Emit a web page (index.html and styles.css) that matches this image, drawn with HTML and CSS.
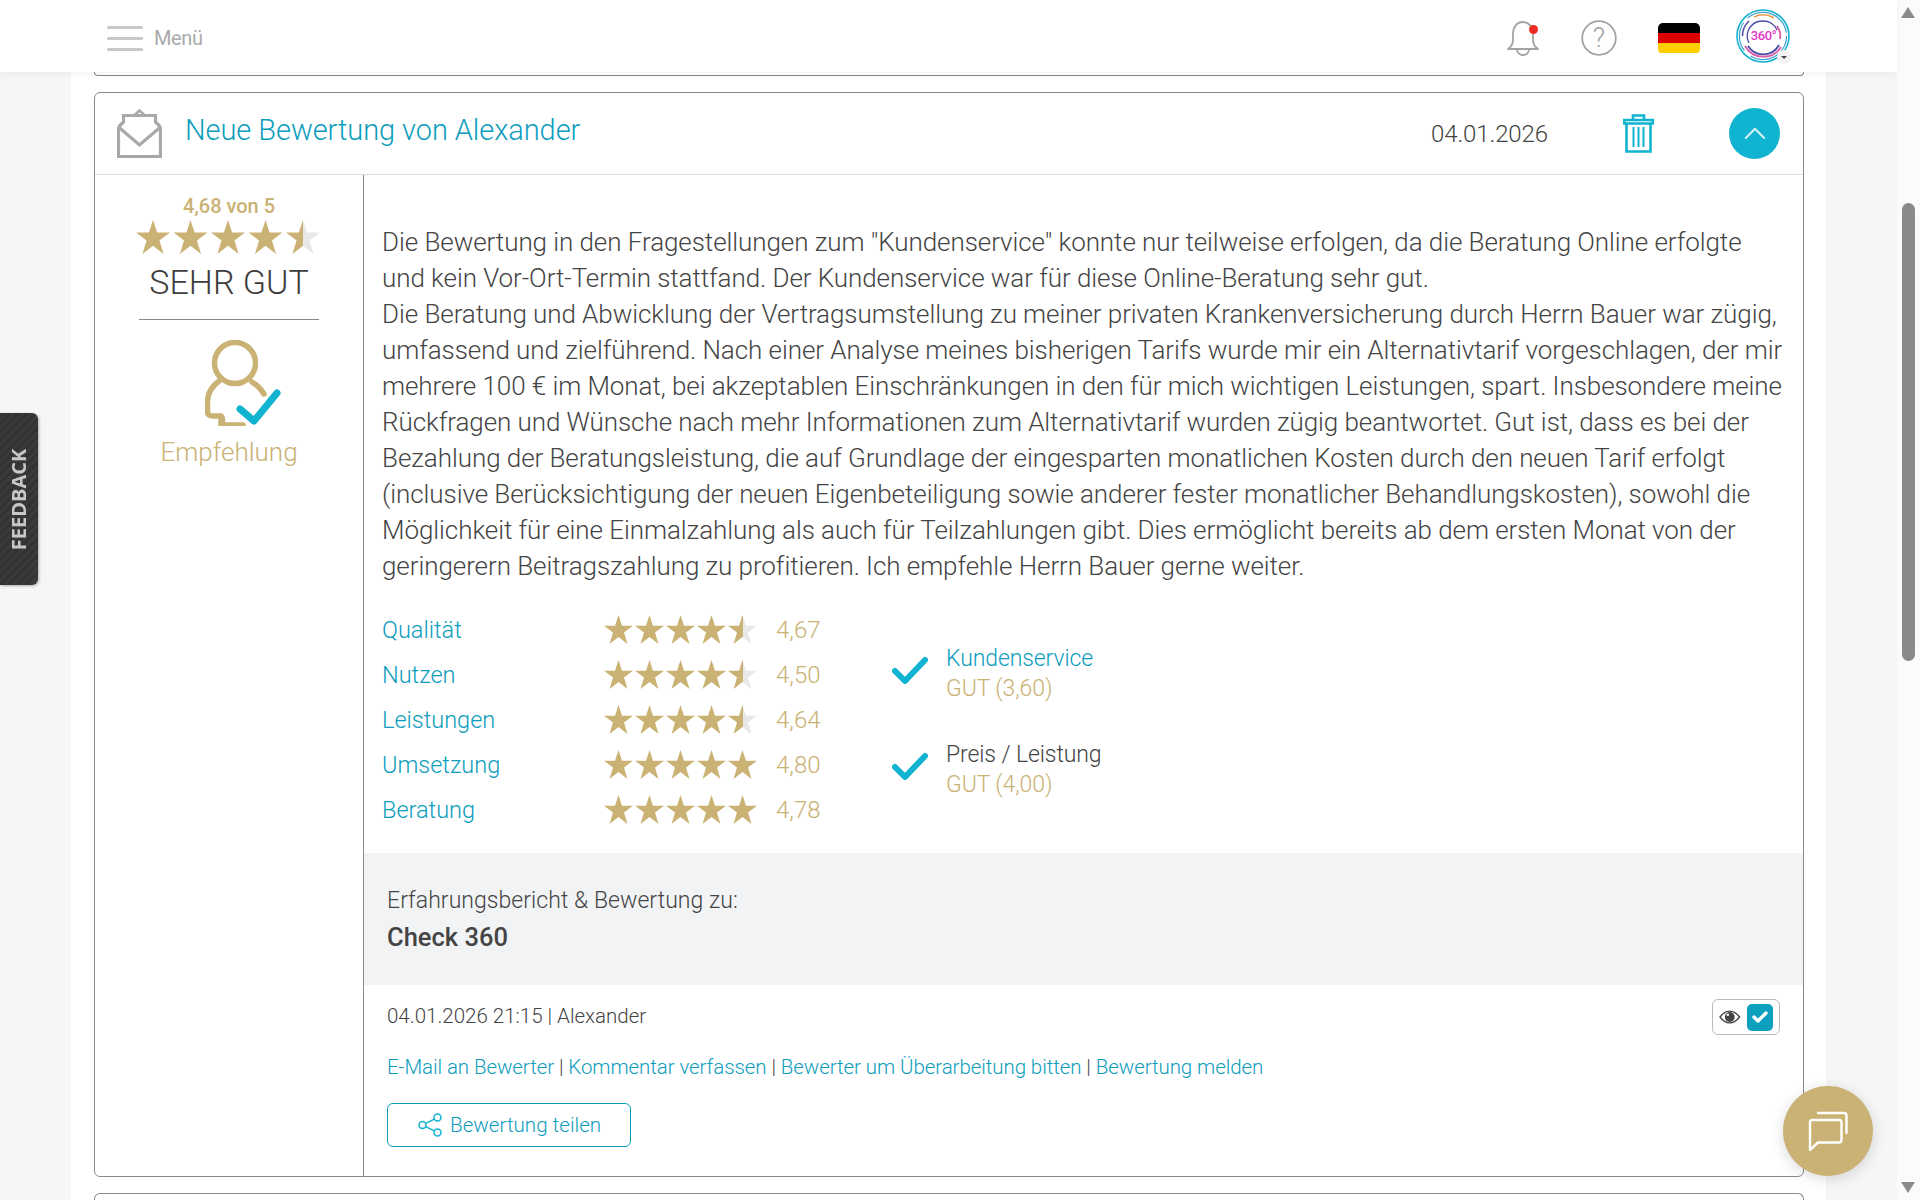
FILE: index.html
```html
<!DOCTYPE html>
<html lang="de">
<head>
  <meta charset="UTF-8" />
  <meta name="viewport" content="width=device-width, initial-scale=1.0"/>
  <title>Bewertungen</title>
  <link rel="stylesheet" href="styles.css">
</head>
<body>
  <div class="shell">
    <div class="page">
      <header class="topbar">
        <div class="menu">
          <span class="burger"><i></i><i></i><i></i></span>
          <span>Menü</span>
        </div>
        <div class="top-icons">
          <svg class="bell" viewBox="0 0 32 36" fill="none" stroke="#a3a3a3" stroke-width="1.8" stroke-linecap="round" stroke-linejoin="round">
            <path d="M1 29c3-2 5-4 5-9v-6C6 7 10 2 16 2c6 0 10 5 10 12v6c0 5 2 7 5 9z"/>
            <path d="M10 29c0 4 3 6 6 6s6-2 6-6"/>
          </svg>
          <span class="bell-dot"></span>
          <svg class="help" viewBox="0 0 36 36">
            <circle cx="18" cy="18" r="16.8" fill="none" stroke="#a3a3a3" stroke-width="1.8"/>
            <text x="18" y="27" text-anchor="middle" class="help-mark">?</text>
          </svg>
          <span class="flag"><i class="black"></i><i class="red"></i><i class="gold"></i></span>
          <span class="avatar">
            <svg viewBox="0 0 54 54" fill="none">
              <circle cx="27" cy="27" r="26" stroke="#14b2d0" stroke-width="1.6"/>
              <circle cx="27" cy="27" r="23.6" stroke="#3f9fd0" stroke-width="1.2" stroke-dasharray="50 8 30 6"/>
              <path d="M9 37A21 21 0 0 0 45 38" stroke="#d95aa6" stroke-width="1.8"/>
              <path d="M18 8A21 21 0 0 1 38 9" stroke="#ee9a48" stroke-width="1.6"/>
              <path d="M6.500 27A20.500 20.500 0 0 1 13 12" stroke="#5a4fa8" stroke-width="1.6"/>
              <path d="M12 37A18 18 0 0 0 43 36" stroke="#4b4aa6" stroke-width="1.8"/>
              <path d="M44 30A17 17 0 0 0 41 17" stroke="#d95aa6" stroke-width="1.8"/>
              <path d="M13 34A15 15 0 0 1 27 12A15 15 0 0 1 41 21" stroke="#4b4aa6" stroke-width="1.3"/>
              <text x="27.500" y="31" text-anchor="middle" class="avatar-text">360°</text>
            </svg>
            <span class="avatar-drop"></span>
          </span>
        </div>
      </header>

      <main class="content">
        <div class="card-stub-top"></div>

        <article class="card">
          <div class="card-head">
            <svg class="envelope" viewBox="0 0 45 49" fill="none" stroke="#a8a8a8" stroke-width="3.200">
              <path d="M1.500 18v29.500h42V18"/>
              <path d="M1.500 18l21 18 21-18"/>
              <path d="M1.500 18l5-5V6.500h32V13l5 5"/>
              <path d="M17 6.500l5.500-5 5.500 5" stroke-width="2.500"/>
            </svg>
            <h2 class="card-title">Neue Bewertung von Alexander</h2>
            <span class="card-date">04.01.2026</span>
            <svg class="trash" viewBox="0 0 31 39" fill="none" stroke="#10b3d0" stroke-width="2.600">
              <path d="M1.300 9.500V6h28.400v3.500z"/>
              <path d="M10 6V1.500h11V6"/>
              <path d="M3.500 9.500v28h24v-28"/>
              <path d="M10.500 13v20M15.500 13v20M20.500 13v20" stroke-width="2"/>
            </svg>
            <span class="collapse">
              <svg viewBox="0 0 24 14" fill="none" stroke="#cfeef5" stroke-width="2.400" stroke-linecap="round" stroke-linejoin="round"><path d="M2 12L12 2l10 10"/></svg>
            </span>
          </div>

          <div class="card-body">
            <aside class="summary">
              <div class="score">4,68 von 5</div>
              <div class="stars stars-big">
                <i class="star"></i><i class="star"></i><i class="star"></i><i class="star"></i><i class="star star-half"></i>
              </div>
              <div class="grade">SEHR GUT</div>
              <hr class="summary-line">
              <svg class="person" viewBox="0 0 76 86" fill="none">
                <circle cx="30" cy="23" r="20.500" stroke="#c9b273" stroke-width="5.500"/>
                <path d="M14 41C6 47 2.500 54 2.500 62v10c0 4 4 4 7 4h6c2 0 2 3 2 7M16 76v9h22M47 42c5 3 9 7 12 12" stroke="#c9b273" stroke-width="5.500" stroke-linecap="round" stroke-linejoin="round"/>
                <path d="M35 69l14 12 23-28" stroke="#10b3d0" stroke-width="7" stroke-linecap="round" stroke-linejoin="round"/>
              </svg>
              <div class="recommend">Empfehlung</div>
            </aside>

            <section class="detail">
              <div class="detail-main">
                <p class="review">Die Bewertung in den Fragestellungen zum "Kundenservice" konnte nur teilweise erfolgen, da die Beratung Online erfolgte<br>und kein Vor-Ort-Termin stattfand. Der Kundenservice war für diese Online-Beratung sehr gut.<br>Die Beratung und Abwicklung der Vertragsumstellung zu meiner privaten Krankenversicherung durch Herrn Bauer war zügig,<br>umfassend und zielführend. Nach einer Analyse meines bisherigen Tarifs wurde mir ein Alternativtarif vorgeschlagen, der mir<br>mehrere 100 € im Monat, bei akzeptablen Einschränkungen in den für mich wichtigen Leistungen, spart. Insbesondere meine<br>Rückfragen und Wünsche nach mehr Informationen zum Alternativtarif wurden zügig beantwortet. Gut ist, dass es bei der<br>Bezahlung der Beratungsleistung, die auf Grundlage der eingesparten monatlichen Kosten durch den neuen Tarif erfolgt<br>(inclusive Berücksichtigung der neuen Eigenbeteiligung sowie anderer fester monatlicher Behandlungskosten), sowohl die<br>Möglichkeit für eine Einmalzahlung als auch für Teilzahlungen gibt. Dies ermöglicht bereits ab dem ersten Monat von der<br>geringerern Beitragszahlung zu profitieren. Ich empfehle Herrn Bauer gerne weiter.</p>

                <div class="ratings">
                  <div class="rating-list">
                    <div class="rating-row">
                      <a class="rating-name">Qualität</a>
                      <div class="stars"><i class="star"></i><i class="star"></i><i class="star"></i><i class="star"></i><i class="star star-half"></i></div>
                      <span class="rating-val">4,67</span>
                    </div>
                    <div class="rating-row">
                      <a class="rating-name">Nutzen</a>
                      <div class="stars"><i class="star"></i><i class="star"></i><i class="star"></i><i class="star"></i><i class="star star-half"></i></div>
                      <span class="rating-val">4,50</span>
                    </div>
                    <div class="rating-row">
                      <a class="rating-name">Leistungen</a>
                      <div class="stars"><i class="star"></i><i class="star"></i><i class="star"></i><i class="star"></i><i class="star star-half"></i></div>
                      <span class="rating-val">4,64</span>
                    </div>
                    <div class="rating-row">
                      <a class="rating-name">Umsetzung</a>
                      <div class="stars"><i class="star"></i><i class="star"></i><i class="star"></i><i class="star"></i><i class="star"></i></div>
                      <span class="rating-val">4,80</span>
                    </div>
                    <div class="rating-row">
                      <a class="rating-name">Beratung</a>
                      <div class="stars"><i class="star"></i><i class="star"></i><i class="star"></i><i class="star"></i><i class="star"></i></div>
                      <span class="rating-val">4,78</span>
                    </div>
                  </div>

                  <div class="checks">
                    <div class="check-item">
                      <svg class="tick" viewBox="0 0 36 27" fill="none" stroke="#10b3d0" stroke-width="6" stroke-linecap="round" stroke-linejoin="round"><path d="M3 14l10 10L33 3"/></svg>
                      <div>
                        <a class="check-title">Kundenservice</a>
                        <div class="check-grade">GUT (3,60)</div>
                      </div>
                    </div>
                    <div class="check-item">
                      <svg class="tick" viewBox="0 0 36 27" fill="none" stroke="#10b3d0" stroke-width="6" stroke-linecap="round" stroke-linejoin="round"><path d="M3 14l10 10L33 3"/></svg>
                      <div>
                        <span class="check-title plain">Preis / Leistung</span>
                        <div class="check-grade">GUT (4,00)</div>
                      </div>
                    </div>
                  </div>
                </div>
              </div>

              <div class="subject">
                <div class="subject-label">Erfahrungsbericht &amp; Bewertung zu:</div>
                <div class="subject-name">Check 360</div>
              </div>

              <div class="footer">
                <div class="meta-row">
                  <span class="meta-text">04.01.2026 21:15 | Alexander</span>
                  <div class="visibility">
                    <svg class="eye" viewBox="0 0 22 14">
                      <path d="M1 7c3-4 6-6 10-6s7 2 10 6c-3 4-6 6-10 6S4 11 1 7z" fill="#fff" stroke="#444" stroke-width="1.300"/>
                      <circle cx="11" cy="7" r="5" fill="#444"/>
                      <circle cx="9" cy="4.800" r="1.300" fill="#fff"/>
                    </svg>
                    <span class="checkbox">
                      <svg viewBox="0 0 16 12" fill="none" stroke="#fff" stroke-width="3.400" stroke-linecap="round" stroke-linejoin="round"><path d="M2 6l4 4 8-8"/></svg>
                    </span>
                  </div>
                </div>
                <div class="actions">
                  <a>E-Mail an Bewerter</a> | <a>Kommentar verfassen</a> | <a>Bewerter um Überarbeitung bitten</a> | <a>Bewertung melden</a>
                </div>
                <a class="share-btn">
                  <svg class="share" viewBox="0 0 24 24" fill="none" stroke="#10b3d0" stroke-width="1.500">
                    <circle cx="4.500" cy="12" r="3.500"/>
                    <circle cx="19.500" cy="4.500" r="3.500"/>
                    <circle cx="19.500" cy="19.500" r="3.500"/>
                    <path d="M7.700 10.400l8.600-4.300M7.700 13.600l8.600 4.300"/>
                  </svg>
                  Bewertung teilen
                </a>
              </div>
            </section>
          </div>
        </article>

        <div class="card-stub-bottom"></div>
      </main>
    </div>

    <div class="scrollbar">
      <span class="arrow-up"></span>
      <span class="thumb"></span>
      <span class="arrow-down"></span>
    </div>
  </div>

  <div class="feedback"><span>FEEDBACK</span></div>

  <div class="chat">
    <svg viewBox="0 0 40 40" fill="none" stroke="#fff" stroke-width="2.400" stroke-linejoin="round" stroke-linecap="round">
      <path d="M2 11.500c0-1.500 1-2.500 2.500-2.500H31c1.500 0 2.500 1 2.500 2.500V29c0 1.500-1 2.500-2.500 2.500H10L2 39z"/>
      <path d="M10 2h26c1.500 0 2.500 1 2.500 2.500V22"/>
    </svg>
  </div>
</body>
</html>
```

FILE: styles.css
```css
:root {
  --teal: #0d9dbc;
  --teal-light: #10b3d0;
  --gold: #c9b273;
  --text: #444;
  --line: #8a8a8a;
}

* {
  box-sizing: border-box;
}

html, body {
  height: 100%;
}

body {
  margin: 0;
  overflow: hidden;
  font-family: Roboto, sans-serif;
  font-weight: 300;
  color: var(--text);
  background: #f6f6f6;
}

a {
  color: var(--teal);
}

.shell {
  display: flex;
  height: 1200px;
}

.page {
  flex: 1;
  min-width: 0;
}

/* top bar */

.topbar {
  position: relative;
  z-index: 2;
  display: flex;
  align-items: center;
  justify-content: space-between;
  height: 72px;
  padding: 4px 107px 0;
  background: #fff;
  box-shadow: 0 2px 8px rgba(0,0,0,0.05);
}

.menu {
  display: flex;
  align-items: center;
  gap: 11px;
  font-size: 20px;
  font-weight: 400;
  color: #aaa;
  letter-spacing: -0.4px;
}

.burger {
  display: flex;
  flex-direction: column;
  gap: 8px;
  width: 36px;
}

.burger i {
  display: block;
  height: 3px;
  border-radius: 2px;
  background: #c8c8c8;
}

.top-icons {
  position: relative;
  display: flex;
  align-items: center;
}

.bell {
  width: 32px;
  height: 36px;
  margin-right: 42px;
}

.bell-dot {
  position: absolute;
  left: 22px;
  top: 12px;
  width: 9px;
  height: 9px;
  border-radius: 50%;
  background: #ee2b24;
}

.help {
  width: 36px;
  height: 36px;
  margin-right: 41px;
}

.help-mark {
  font-family: Roboto, sans-serif;
  font-size: 27px;
  fill: #a3a3a3;
}

.flag {
  display: flex;
  flex-direction: column;
  width: 42px;
  height: 31px;
  margin-right: 36px;
  border-radius: 5px;
  overflow: hidden;
}

.flag i {
  flex: 1;
}

.flag .black { background: #000; }
.flag .red { background: #dd0000; }
.flag .gold { background: #ffce00; }

.avatar {
  position: relative;
  display: block;
  width: 54px;
  height: 54px;
  margin-top: -4px;
}

.avatar svg {
  display: block;
}

.avatar-text {
  font-family: Roboto, sans-serif;
  font-size: 13px;
  font-weight: 500;
  letter-spacing: -0.4px;
  fill: #e636c4;
}

.avatar-drop {
  position: absolute;
  right: -1px;
  bottom: -1px;
  width: 14px;
  height: 14px;
  border-radius: 50%;
  background: #f2f2f2;
}

.avatar-drop::after {
  content: "";
  position: absolute;
  left: 4px;
  top: 6px;
  border: 3px solid transparent;
  border-top: 3px solid #444;
}

/* content */

.content {
  margin: 0 71px;
  padding: 0 22px 0 23px;
  height: 1128px;
  overflow: hidden;
  background: #fff;
}

.card-stub-top {
  height: 4px;
  margin-bottom: 16px;
  border: 1px solid var(--line);
  border-top: none;
  border-radius: 0 0 6px 6px;
}

.card-stub-bottom {
  height: 20px;
  margin-top: 16px;
  border: 1px solid var(--line);
  border-bottom: none;
  border-radius: 6px 6px 0 0;
}

.card {
  height: 1085px;
  border: 1px solid var(--line);
  border-radius: 6px;
  display: flex;
  flex-direction: column;
}

.card-head {
  display: flex;
  align-items: center;
  height: 82px;
  flex-shrink: 0;
  padding: 0 23px 0 22px;
  border-bottom: 1px solid #ddd;
}

.envelope {
  width: 45px;
  height: 49px;
  margin-right: 23px;
}

.card-title {
  flex: 1;
  margin: -8px 0 0;
  font-size: 29px;
  font-weight: 300;
  color: var(--teal);
  letter-spacing: -0.07px;
}

.card-date {
  font-size: 24px;
  margin-top: 1px;
  letter-spacing: -0.1px;
}

.trash {
  width: 31px;
  height: 39px;
  margin: 0 75px 0 75px;
}

.collapse {
  display: flex;
  align-items: center;
  justify-content: center;
  width: 51px;
  height: 51px;
  border-radius: 50%;
  background: var(--teal-light);
}

.collapse svg {
  width: 22px;
}

.card-body {
  flex: 1;
  display: flex;
  min-height: 0;
}

/* left summary */

.summary {
  width: 269px;
  flex-shrink: 0;
  padding-top: 19px;
  border-right: 1px solid var(--line);
  text-align: center;
}

.score {
  font-size: 20px;
  font-weight: 500;
  line-height: 24px;
  color: var(--gold);
}

.stars {
  display: flex;
  gap: 2px;
}

.star {
  display: block;
  width: 29px;
  height: 29px;
  background: var(--gold);
  clip-path: polygon(50% 0, 62% 37%, 100% 37%, 69% 60%, 81% 100%, 50% 76%, 19% 100%, 31% 60%, 0 37%, 38% 37%);
}

.star-half {
  background: linear-gradient(90deg, var(--gold) 50%, #e8e8e8 50%);
}

.stars-big {
  gap: 3.5px;
  justify-content: center;
  margin-top: 2px;
  padding-right: 2px;
}

.stars-big .star {
  width: 34px;
  height: 34px;
}

.grade {
  margin-top: 4px;
  font-size: 34px;
  font-weight: 300;
  line-height: 48px;
  color: #3d3d3d;
}

.summary-line {
  width: 180px;
  height: 1px;
  margin: 13px auto 20px 44px;
  border: none;
  background: var(--line);
}

.person {
  display: block;
  width: 76px;
  height: 86px;
  margin: 0 0 0 110px;
}

.recommend {
  margin-top: 7px;
  font-size: 26px;
  line-height: 38px;
  color: var(--gold);
}

/* right detail */

.detail {
  flex: 1;
  min-width: 0;
  display: flex;
  flex-direction: column;
}

.detail-main {
  padding: 49px 18px 0 18px;
}

.review {
  margin: 0;
  font-size: 26px;
  line-height: 36px;
  letter-spacing: -0.07px;
  white-space: nowrap;
}

.ratings {
  display: flex;
  margin-top: 23px;
}

.rating-list {
  width: 510px;
}

.rating-row {
  display: flex;
  align-items: center;
  height: 45px;
}

.rating-name {
  width: 222px;
  font-size: 23.5px;
}

.rating-val {
  margin-left: 19px;
  font-size: 24px;
  color: var(--gold);
}

.checks {
  display: flex;
  flex-direction: column;
  gap: 36px;
  padding-top: 37px;
}

.check-item {
  display: flex;
  align-items: center;
  gap: 18px;
}

.tick {
  width: 36px;
  height: 27px;
  margin-bottom: 8px;
}

.check-title {
  display: block;
  font-size: 23px;
  line-height: 30px;
  letter-spacing: -0.1px;
}

.check-title.plain {
  color: var(--text);
}

.check-grade {
  font-size: 23px;
  line-height: 30px;
  letter-spacing: -0.1px;
  color: var(--gold);
}

.subject {
  height: 132px;
  margin-top: 21px;
  padding: 31px 23px 0;
  background: #f2f3f5;
}

.subject-label {
  font-size: 23px;
  line-height: 34px;
  letter-spacing: 0.05px;
}

.subject-name {
  font-size: 25.500px;
  font-weight: 500;
  line-height: 38px;
}

.footer {
  padding: 14px 23px 0;
  font-size: 20.500px;
}

.meta-row {
  display: flex;
  align-items: flex-start;
  justify-content: space-between;
  height: 53px;
}

.meta-text {
  margin-top: 5px;
}

.visibility {
  display: flex;
  align-items: center;
  gap: 6px;
  width: 68px;
  height: 36px;
  padding: 0 6px;
  border: 1px solid #bbb;
  border-radius: 6px;
}

.eye {
  width: 22px;
  height: 14px;
}

.checkbox {
  display: flex;
  align-items: center;
  justify-content: center;
  width: 27px;
  height: 27px;
  border-radius: 5px;
  background: #0ea0bf;
}

.checkbox svg {
  width: 16px;
}

.actions {
  font-size: 20.500px;
  line-height: 30px;
  letter-spacing: -0.08px;
}

.share-btn {
  display: flex;
  align-items: center;
  gap: 8px;
  width: 244px;
  height: 44px;
  margin-top: 21px;
  padding-left: 30px;
  border: 1px solid var(--teal);
  border-radius: 6px;
  font-size: 20.600px;
}

.share {
  width: 24px;
  height: 24px;
}

/* scrollbar */

.scrollbar {
  position: relative;
  width: 23px;
  flex-shrink: 0;
  background: #fbfbfb;
}

.thumb {
  position: absolute;
  left: 5px;
  top: 203px;
  width: 13px;
  height: 458px;
  border-radius: 7px;
  background: #8a8a8a;
}

.arrow-up,
.arrow-down {
  position: absolute;
  left: 4px;
  border: 7px solid transparent;
}

.arrow-up {
  top: 0;
  border-bottom: 11px solid #8a8a8a;
}

.arrow-down {
  bottom: 0;
  border-top: 11px solid #8a8a8a;
}

/* floating */

.feedback {
  position: fixed;
  left: 0;
  top: 413px;
  display: flex;
  align-items: center;
  justify-content: center;
  width: 38px;
  height: 172px;
  border-radius: 0 6px 6px 0;
  background: repeating-linear-gradient(135deg, #333 0 3px, #3a3a3a 3px 6px);
  box-shadow: 1px 1px 3px rgba(0,0,0,0.3);
}

.feedback span {
  transform: rotate(-90deg);
  font-family: "Open Sans", sans-serif;
  font-size: 20px;
  font-weight: 700;
  color: #c8c8c8;
  white-space: nowrap;
}

.chat {
  position: fixed;
  left: 1783px;
  top: 1086px;
  display: flex;
  align-items: center;
  justify-content: center;
  width: 90px;
  height: 90px;
  border-radius: 50%;
  background: var(--gold);
  box-shadow: 0 3px 14px rgba(0,0,0,0.15);
}

.chat svg {
  width: 40px;
  height: 40px;
}
```
